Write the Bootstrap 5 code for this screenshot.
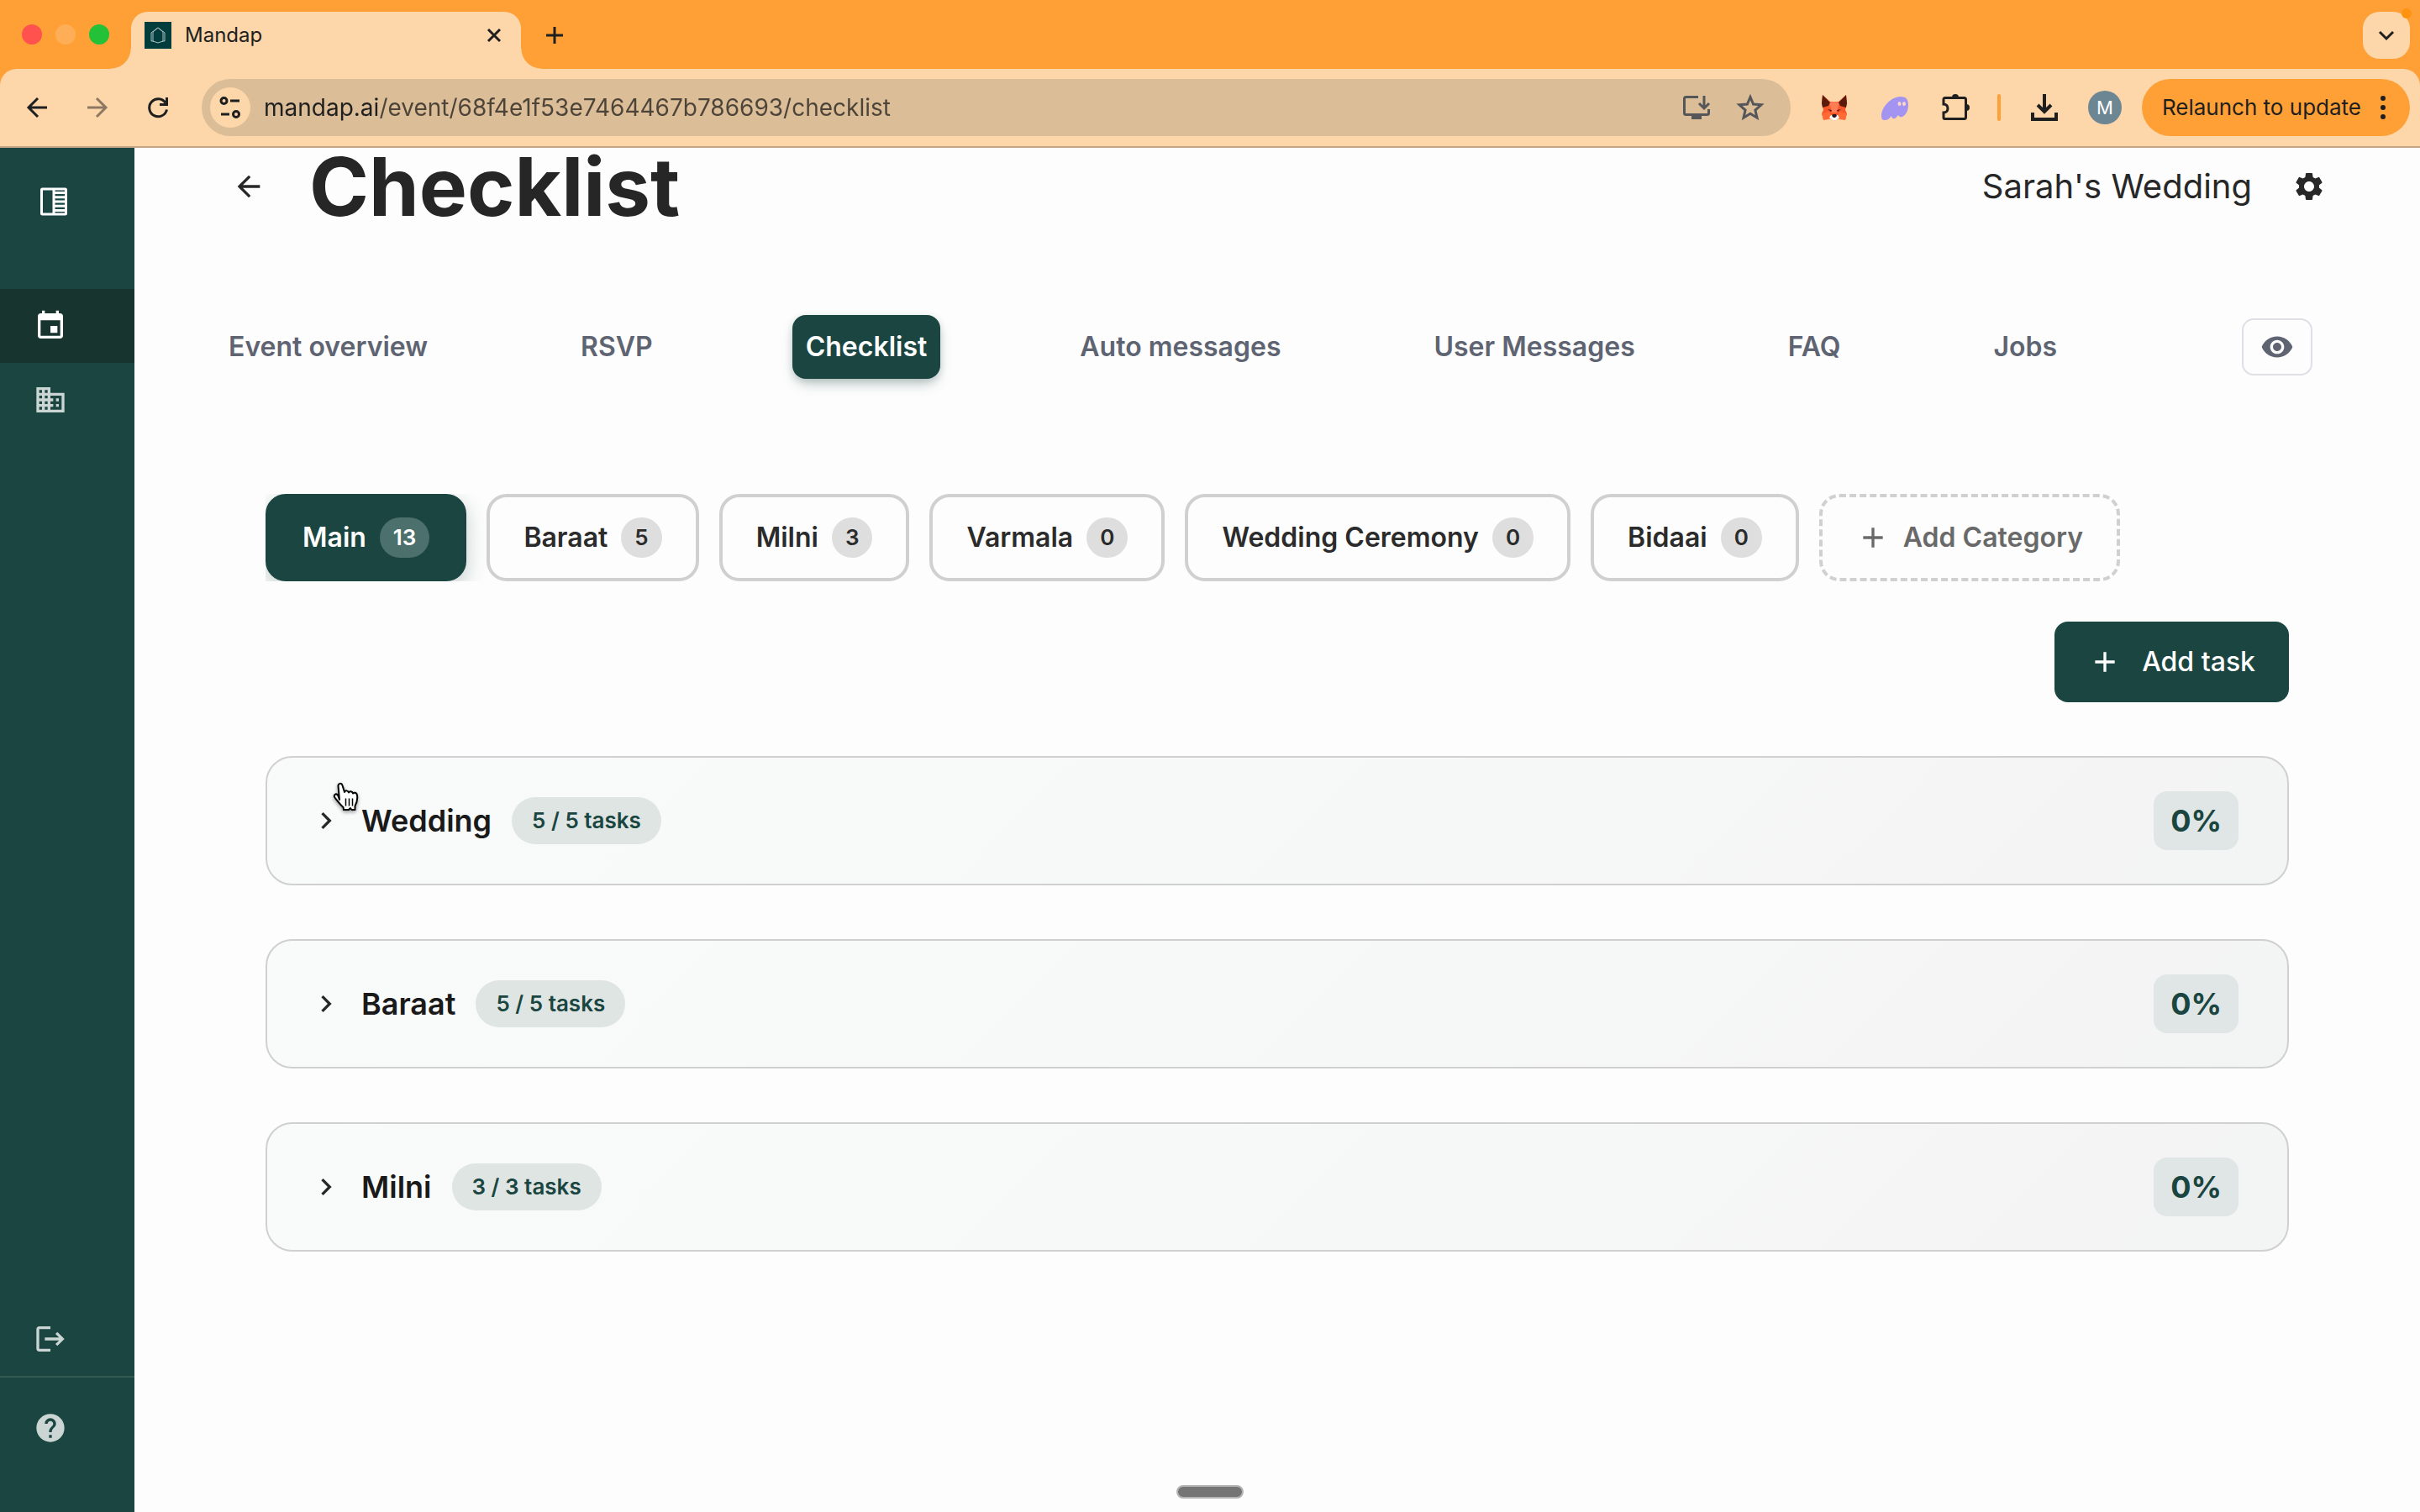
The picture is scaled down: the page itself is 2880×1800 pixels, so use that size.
<!DOCTYPE html>
<html lang="en">
<head>
<meta charset="utf-8">
<meta name="viewport" content="width=device-width, initial-scale=1">
<title>Mandap</title>
<link href="https://cdn.jsdelivr.net/npm/bootstrap@5.3.0/dist/css/bootstrap.min.css" rel="stylesheet">
<style>
  :root { --green: #1a4540; --orange: #fea036; --peach: #fdd6aa; --ink: #272727; --slate: #5f6472; --line: #d0d0d0; }
  body { font-family: Inter, "Liberation Sans", sans-serif; background: #fdfdfd; color: var(--ink); font-size: 32px; line-height: 48px; }
  svg { display: block; flex: none; fill: currentColor; }
  button { font-family: inherit; color: inherit; }
  .plain-btn { background: none; border: 0; padding: 0; display: flex; align-items: center; justify-content: center; }
  .ic { width: 40px; height: 40px; }
  .ic-sm { width: 36px; height: 36px; }
  .stroke { fill: none; stroke: currentColor; }

  /* browser window */
  .tab-strip { background: var(--orange); height: 82px; padding: 14px 12px 0 26px; }
  .lights { gap: 16px; margin: 15px 26px 0 0; height: 24px; }
  .lights span { width: 24px; height: 24px; border-radius: 50%; }
  .light-close { background: #ff524f; }
  .light-min { background: #feae56; }
  .light-max { background: #23c138; }
  .browser-tab { position: relative; width: 464px; height: 68px; background: var(--peach); border-radius: 20px 20px 0 0; padding: 0 20px 12px 16px; gap: 16px; font-size: 24px; color: #1f1f1f; }
  .browser-tab::before, .browser-tab::after { content: ""; position: absolute; bottom: 0; width: 24px; height: 24px; }
  .browser-tab::before { right: 100%; background: radial-gradient(circle at 0 0, transparent 23px, var(--peach) 24px); }
  .browser-tab::after { left: 100%; background: radial-gradient(circle at 100% 0, transparent 23px, var(--peach) 24px); }
  .new-tab { margin: 0 0 13px 28px; color: #1f1f1f; }
  .tab-search { position: relative; width: 56px; height: 56px; border-radius: 20px; background: var(--peach); color: #1f1f1f; }
  .tab-search i { position: absolute; top: -4px; right: -2px; width: 12px; height: 12px; border-radius: 50%; background: #ff930f; }
  .chrome-base { background: var(--orange); }
  .tool-bar { background: var(--peach); border-radius: 20px 20px 0 0; border-bottom: 2px solid #c3a687; padding: 12px 12px 12px 26px; color: #1f1f1f; }
  .nav-tools { gap: 36px; margin-right: 34px; }
  .omnibox { background: #dbbd97; border-radius: 34px; height: 68px; padding: 0 30px 0 10px; gap: 16px; }
  .site-info { width: 48px; height: 48px; border-radius: 50%; background: var(--peach); }
  .url-box { border: 0; outline: 0; padding: 0; font-size: 28px; min-width: 0; color: transparent; background: linear-gradient(90deg, #1f1f1f 137px, #4c4339 137px); -webkit-background-clip: text; background-clip: text; }
  .omni-icons { gap: 28px; color: #55565a; }
  .ext-icons { gap: 36px; margin: 0 32px 0 34px; }
  .tool-rule { width: 4px; height: 32px; border-radius: 2px; background: var(--orange); }
  .right-tools { gap: 34px; margin: 0 24px 0 34px; }
  .avatar { width: 40px; height: 40px; border-radius: 50%; background: #6d8693; color: #fff; font-size: 22px; }
  .relaunch { height: 68px; border-radius: 34px; background: var(--orange); padding: 0 14px 0 24px; gap: 8px; font-size: 26px; white-space: nowrap; }

  /* application */
  .side-bar { width: 160px; flex: none; background: var(--green); color: #cbd5d3; }
  .side-toggle { height: 128px; padding-left: 44px; margin-bottom: 40px; color: #fff; justify-content: flex-start; }
  .side-link { height: 88px; padding-left: 40px; display: flex; align-items: center; color: inherit; }
  .side-link.current { background: #17342e; color: #fff; }
  .side-foot { border-top: 2px solid #325a53; padding: 16px 0 56px; }
  .page-head { padding: 0 112px 0 116px; }
  .page-head h1 { font-size: 96px; line-height: 92px; font-weight: 700; margin: 0 0 0 52px; color: #262626; }
  .event-name { font-size: 40px; margin-right: 48px; }
  .event-nav { margin-top: 107px; padding: 0 128px 0 96px; }
  .event-tabs { margin-right: 204px; }
  .event-tabs a { font-weight: 600; line-height: 44px; padding: 16px; border-radius: 16px; color: var(--slate); text-decoration: none; white-space: nowrap; }
  .event-tabs a.current { background: var(--green); color: #fff; box-shadow: 0 8px 16px -4px rgba(26,69,64,.35), 0 2px 8px rgba(26,69,64,.12); }
  .preview-btn { width: 84px; height: 68px; border: 2px solid #e0dfe6; border-radius: 14px; color: var(--slate); }
  .board { padding: 137px 156px 0; }
  .chips { gap: 24px; overflow: hidden; }
  .chip { display: flex; align-items: center; gap: 16px; padding: 24px 40px; border: 4px solid var(--line); border-radius: 24px; background: #fdfdfd; font-weight: 600; color: #2b2b2b; white-space: nowrap; }
  .chip .count { min-width: 48px; height: 48px; padding: 0 16px; border-radius: 24px; background: #dedede; font-size: 26px; text-align: center; }
  .chip.current { background: var(--green); border-color: var(--green); color: #fff; box-shadow: 0 8px 24px rgba(26,69,64,.25); }
  .chip.current .count { background: #4c706b; }
  .chip.add { border-style: dashed; color: #696969; }
  .add-task { background: var(--green); color: #fff; border-radius: 16px; padding: 24px 40px; gap: 24px; font-weight: 500; margin: 48px 0 64px; }
  .task-group { position: relative; display: flex; align-items: center; border: 2px solid var(--line); border-radius: 32px; padding: 40px 58px 40px 50px; background: linear-gradient(135deg, #f9fbfa 0%, #f7f9f8 45%, #f4f4f4 90%, #f2f5f4 100%); }
  .task-groups { gap: 64px; }
  .task-group h2 { font-size: 36px; line-height: 48px; font-weight: 600; margin: 0 24px 0 22px; color: #1a1a1a; }
  .task-count { background: #dfe5e3; color: var(--green); border-radius: 28px; padding: 4px 24px; font-size: 26px; font-weight: 600; }
  .percent { background: #e0e6e5; color: var(--green); border-radius: 16px; padding: 14px 20px; font-size: 36px; line-height: 42px; font-weight: 700; }
  .pointer { position: absolute; left: 76px; top: 26px; width: 36px; height: 40px; filter: drop-shadow(0 2px 2px rgba(0,0,0,.4)); }
  .grip { position: fixed; left: 50%; bottom: 16px; width: 80px; height: 16px; margin-left: -40px; border-radius: 8px; background: #757575; border: 2px solid #b3b3b3; }
</style>
<script src="https://cdn.jsdelivr.net/npm/bootstrap@5.3.0/dist/js/bootstrap.bundle.min.js"></script>
</head>
<body class="d-flex flex-column min-vh-100">

<header>
  <div class="tab-strip d-flex align-items-start">
    <div class="lights d-flex"><span class="light-close"></span><span class="light-min"></span><span class="light-max"></span></div>
    <div class="browser-tab d-flex align-items-center">
      <svg width="32" height="32" viewBox="0 0 32 32"><rect width="32" height="32" fill="#023d3e"/><path d="M16 7l6 5v11l-6 2-6-2V12zM8 13v10h3M24 13v10h-3M8 13l8-6 8 6" fill="none" stroke="#a9bfbd"/></svg>
      <span class="flex-grow-1">Mandap</span>
      <button class="plain-btn" aria-label="Close tab"><svg class="stroke" width="24" height="24" viewBox="0 0 24 24" stroke-width="3"><path d="M5 5l14 14M19 5L5 19"/></svg></button>
    </div>
    <button class="plain-btn new-tab align-self-center" aria-label="New tab"><svg class="stroke" width="24" height="24" viewBox="0 0 24 24" stroke-width="3"><path d="M12 2v20M2 12h20"/></svg></button>
    <button class="plain-btn tab-search ms-auto" aria-label="Search tabs"><svg class="stroke" width="20" height="20" viewBox="0 0 20 20" stroke-width="3"><path d="M2 6l8 8 8-8"/></svg><i></i></button>
  </div>
  <div class="chrome-base">
    <div class="tool-bar d-flex align-items-center">
      <div class="nav-tools d-flex">
        <button class="plain-btn" aria-label="Back"><svg class="stroke ic-sm" viewBox="0 0 36 36" stroke-width="3"><path d="M30 18H8M19 7L8 18l11 11"/></svg></button>
        <button class="plain-btn" aria-label="Forward"><svg class="stroke ic-sm" viewBox="0 0 36 36" stroke-width="3" opacity=".5"><path d="M6 18h22M17 7l11 11-11 11"/></svg></button>
        <button class="plain-btn" aria-label="Reload"><svg class="stroke ic-sm" viewBox="0 0 36 36" stroke-width="3"><path d="M28.5 20.500A10.500 10.500 0 1 1 27 12.500M28.500 6v8.500H20"/></svg></button>
      </div>
      <div class="omnibox d-flex align-items-center flex-grow-1">
        <button class="plain-btn site-info" aria-label="Site information"><svg class="stroke" width="28" height="32" viewBox="0 0 28 32" stroke-width="3"><circle cx="6.500" cy="8" r="3.500"/><path d="M14 8h11M3 24h10"/><circle cx="21" cy="24" r="3.500"/></svg></button>
        <input class="url-box flex-grow-1" type="text" aria-label="Address" value="mandap.ai/event/68f4e1f53e7464467b786693/checklist">
        <div class="omni-icons d-flex">
          <button class="plain-btn" aria-label="Install app"><svg class="stroke ic-sm" viewBox="0 0 36 36" stroke-width="3"><path d="M20 5.500H5.500a2 2 0 0 0-2 2v17a2 2 0 0 0 2 2h25a2 2 0 0 0 2-2V20M27 4v14M21 13l6 6 6-6"/><path d="M12 28h12v4H12z" fill="currentColor" stroke="none"/></svg></button>
          <button class="plain-btn" aria-label="Bookmark"><svg class="stroke ic-sm" viewBox="0 0 36 36" stroke-width="3"><path d="M18 5.500l3.600 8.500 9.400.8-7.100 6.200 2.100 9.200-8-4.900-8 4.900 2.100-9.200L5 14.800l9.400-.8z"/></svg></button>
        </div>
      </div>
      <div class="ext-icons d-flex align-items-center">
        <button class="plain-btn" aria-label="Fox wallet"><svg class="ic-sm" viewBox="0 0 36 36"><path d="M4 3l9 8h10l9-8 1 10-2 8 2 4-2 7-8-1-3 2h-4l-3-2-8 1-2-7 2-4-2-8z" fill="#f9572a"/><path d="M12 12l6-1 6 1-3 12h-6z" fill="#ff7d52"/><path d="M4 3l9 9-2 4-7 2-1-5zM32 3l-9 9 2 4 7 2 1-5z" fill="#5a1a0c"/><path d="M3 25l9-2 3 6-3 3-7 1zM33 25l-9-2-3 6 3 3 7 1z" fill="#ff6a35"/><path d="M10 20l5 1-1 2zM26 20l-5 1 1 2z" fill="#5a1a22"/><path d="M14 27h8l2 3-4 3h-4l-4-3z" fill="#fff"/><path d="M16 26h4l1 2-2 2h-2l-2-2z" fill="#251a20"/></svg></button>
        <button class="plain-btn" aria-label="Ghost wallet"><svg class="ic-sm" viewBox="0 0 36 36"><path d="M2 28C2 17 14 5 25 5c7 0 9 4 9 10 0 7-3 12-7 14-3 1-4-1-5-2-2 2-3 5-6 4-1 0-2-2-2-3-2 3-5 5-8 5-3 0-4-2-4-5z" fill="#a394f2"/><ellipse cx="23.500" cy="13.500" rx="2" ry="2.500" fill="#fdd6c8"/><ellipse cx="29" cy="13.500" rx="2" ry="2.500" fill="#fdd6c8"/></svg></button>
        <button class="plain-btn" aria-label="Extensions"><svg class="stroke ic-sm" viewBox="0 0 36 36" stroke-width="3"><path d="M5.500 6.500h23a2 2 0 0 1 2 2v21a2 2 0 0 1-2 2h-23a1.500 1.500 0 0 1-1.500-1.500v-6c3 0 5-2 5-5s-2-5-5-5V8a1.500 1.500 0 0 1 1.500-1.500z"/><path d="M14 6a4 4 0 0 1 8 0zM31 14a4 4 0 0 1 0 8z" fill="currentColor" stroke="none"/></svg></button>
      </div>
      <div class="tool-rule"></div>
      <div class="right-tools d-flex align-items-center">
        <button class="plain-btn" aria-label="Downloads"><svg class="stroke ic-sm" viewBox="0 0 36 36" stroke-width="4"><path d="M18 2v21M10 15l8 8 8-8M4 24v8h28v-8"/></svg></button>
        <button class="plain-btn avatar" aria-label="Profile">M</button>
      </div>
      <button class="plain-btn relaunch">Relaunch to update <svg width="36" height="36" viewBox="0 0 36 36"><circle cx="18" cy="7" r="3"/><circle cx="18" cy="18" r="3"/><circle cx="18" cy="29" r="3"/></svg></button>
    </div>
  </div>
</header>

<div class="d-flex flex-grow-1">
  <nav class="side-bar d-flex flex-column" aria-label="Main">
    <button class="plain-btn side-toggle" aria-label="Toggle sidebar"><svg class="ic stroke" viewBox="0 0 40 40" stroke-width="3"><rect x="5.500" y="5" width="29" height="30" rx="1"/><path d="M20 5v30M21 9.500h13M21 14.700h13M21 20h13M21 25.200h13M21 30.500h13"/></svg></button>
    <a class="side-link current" href="#" aria-label="Events"><svg class="ic" viewBox="0 0 24 24"><path d="M17 12h-5v5h5v-5zM16 1v2H8V1H6v2H5c-1.110 0-1.990.9-1.990 2L3 19c0 1.100.89 2 2 2h14c1.100 0 2-.9 2-2V5c0-1.100-.9-2-2-2h-1V1h-2zm3 18H5V8h14v11z"/></svg></a>
    <a class="side-link" href="#" aria-label="Venues"><svg class="ic" viewBox="0 0 24 24"><path d="M12 7V3H2v18h20V7H12zM6 19H4v-2h2v2zm0-4H4v-2h2v2zm0-4H4V9h2v2zm0-4H4V5h2v2zm4 12H8v-2h2v2zm0-4H8v-2h2v2zm0-4H8V9h2v2zm0-4H8V5h2v2zm10 12h-8v-2h2v-2h-2v-2h2v-2h-2V9h8v10zm-2-8h-2v2h2v-2zm0 4h-2v2h2v-2z"/></svg></a>
    <a class="side-link mt-auto" href="#" aria-label="Log out"><svg class="ic" viewBox="0 0 24 24"><path d="M17 7l-1.410 1.410L18.170 11H8v2h10.170l-2.580 2.580L17 17l5-5zM4 5h8V3H4c-1.100 0-2 .9-2 2v14c0 1.100.9 2 2 2h8v-2H4V5z"/></svg></a>
    <div class="side-foot">
      <a class="side-link" href="#" aria-label="Help"><svg class="ic" viewBox="0 0 24 24"><path d="M12 2C6.480 2 2 6.480 2 12s4.480 10 10 10 10-4.480 10-10S17.520 2 12 2zm1 17h-2v-2h2v2zm2.070-7.750l-.9.920C13.450 12.900 13 13.500 13 15h-2v-.5c0-1.100.450-2.100 1.170-2.830l1.240-1.260c.370-.360.590-.860.590-1.410 0-1.100-.9-2-2-2s-2 .9-2 2H8c0-2.210 1.790-4 4-4s4 1.790 4 4c0 .880-.360 1.680-.930 2.250z"/></svg></a>
    </div>
  </nav>

  <main class="flex-grow-1">
    <div class="page-head d-flex align-items-center">
      <button class="plain-btn" aria-label="Go back"><svg class="ic" viewBox="0 0 24 24"><path d="M20 11H7.830l5.590-5.590L12 4l-8 8 8 8 1.410-1.410L7.830 13H20v-2z"/></svg></button>
      <h1 class="me-auto">Checklist</h1>
      <span class="event-name">Sarah's Wedding</span>
      <button class="plain-btn" aria-label="Settings"><svg class="ic" viewBox="0 0 24 24"><path d="M19.140 12.940c.040-.3.060-.610.060-.940 0-.320-.020-.640-.070-.940l2.030-1.580c.180-.140.230-.410.120-.610l-1.920-3.320c-.120-.220-.370-.290-.590-.220l-2.390.960c-.5-.380-1.030-.7-1.620-.940l-.360-2.540c-.040-.240-.240-.410-.480-.410h-3.840c-.240 0-.430.170-.470.410l-.360 2.540c-.590.240-1.130.570-1.620.940l-2.390-.960c-.220-.080-.470 0-.590.220L2.740 8.870c-.120.210-.080.470.120.610l2.030 1.580c-.050.3-.090.630-.090.940s.020.640.070.940l-2.030 1.580c-.180.140-.230.410-.120.610l1.920 3.320c.120.220.370.290.590.220l2.390-.960c.5.380 1.030.7 1.620.940l.360 2.540c.050.240.240.410.480.410h3.840c.240 0 .440-.170.470-.410l.360-2.540c.590-.240 1.130-.560 1.620-.940l2.390.960c.220.080.470 0 .590-.220l1.920-3.320c.120-.220.070-.470-.120-.610l-2.010-1.580zM12 15.600c-1.980 0-3.600-1.620-3.600-3.600s1.620-3.600 3.600-3.600 3.600 1.620 3.600 3.600-1.620 3.600-3.600 3.600z"/></svg></button>
    </div>

    <div class="event-nav d-flex align-items-center">
      <nav class="event-tabs d-flex justify-content-between flex-grow-1" aria-label="Event">
        <a href="#">Event overview</a>
        <a href="#">RSVP</a>
        <a href="#" class="current" aria-current="page">Checklist</a>
        <a href="#">Auto messages</a>
        <a href="#">User Messages</a>
        <a href="#">FAQ</a>
        <a href="#">Jobs</a>
      </nav>
      <button class="plain-btn preview-btn" aria-label="Preview"><svg class="ic" viewBox="0 0 24 24"><path d="M12 4.500C7 4.500 2.730 7.610 1 12c1.730 4.390 6 7.500 11 7.500s9.270-3.110 11-7.500c-1.730-4.390-6-7.500-11-7.500zM12 17c-2.760 0-5-2.240-5-5s2.240-5 5-5 5 2.240 5 5-2.240 5-5 5zm0-8c-1.660 0-3 1.340-3 3s1.340 3 3 3 3-1.340 3-3-1.340-3-3-3z"/></svg></button>
    </div>

    <div class="board">
      <div class="chips d-flex">
        <button class="chip current">Main <span class="count">13</span></button>
        <button class="chip">Baraat <span class="count">5</span></button>
        <button class="chip">Milni <span class="count">3</span></button>
        <button class="chip">Varmala <span class="count">0</span></button>
        <button class="chip">Wedding Ceremony <span class="count">0</span></button>
        <button class="chip">Bidaai <span class="count">0</span></button>
        <button class="chip add"><svg class="ic" viewBox="0 0 24 24"><path d="M19 13h-6v6h-2v-6H5v-2h6V5h2v6h6v2z"/></svg>Add Category</button>
      </div>
      <button class="plain-btn add-task ms-auto"><svg class="ic" viewBox="0 0 24 24"><path d="M19 13h-6v6h-2v-6H5v-2h6V5h2v6h6v2z"/></svg>Add task</button>

      <div class="task-groups d-flex flex-column">
        <section class="task-group">
          <button class="plain-btn" aria-label="Expand Wedding"><svg class="ic" viewBox="0 0 24 24"><path d="M10 6L8.590 7.410 13.170 12l-4.580 4.590L10 18l6-6z"/></svg></button>
          <h2>Wedding</h2><span class="task-count">5 / 5 tasks</span><span class="percent ms-auto">0%</span>
          <svg class="pointer" viewBox="0 0 36 40"><path d="M10 24L8.500 8c-.3-3.500 4-4.500 5-1l2.500 8c1-2.500 4.500-2 5 .5 1-2 4.500-1.500 5 1 1.500-1.500 4.500-1 5 2 .8 5-.2 9-2.500 13v4.500h-4l-1.500-2-2 2H15l-.5-3C11 30 8 26 4.500 21.500c-2-3 1-5.500 3.500-3z" fill="#fff" stroke="#000" stroke-width="2" stroke-linejoin="round"/><path d="M17.500 22.500v9M21.500 22.500v9M25.500 22.500v9" stroke="#000" stroke-width="1.500"/></svg>
        </section>
        <section class="task-group">
          <button class="plain-btn" aria-label="Expand Baraat"><svg class="ic" viewBox="0 0 24 24"><path d="M10 6L8.590 7.410 13.170 12l-4.580 4.590L10 18l6-6z"/></svg></button>
          <h2>Baraat</h2><span class="task-count">5 / 5 tasks</span><span class="percent ms-auto">0%</span>
        </section>
        <section class="task-group">
          <button class="plain-btn" aria-label="Expand Milni"><svg class="ic" viewBox="0 0 24 24"><path d="M10 6L8.590 7.410 13.170 12l-4.580 4.590L10 18l6-6z"/></svg></button>
          <h2>Milni</h2><span class="task-count">3 / 3 tasks</span><span class="percent ms-auto">0%</span>
        </section>
      </div>
    </div>
  </main>
</div>
<div class="grip"></div>
</body>
</html>
